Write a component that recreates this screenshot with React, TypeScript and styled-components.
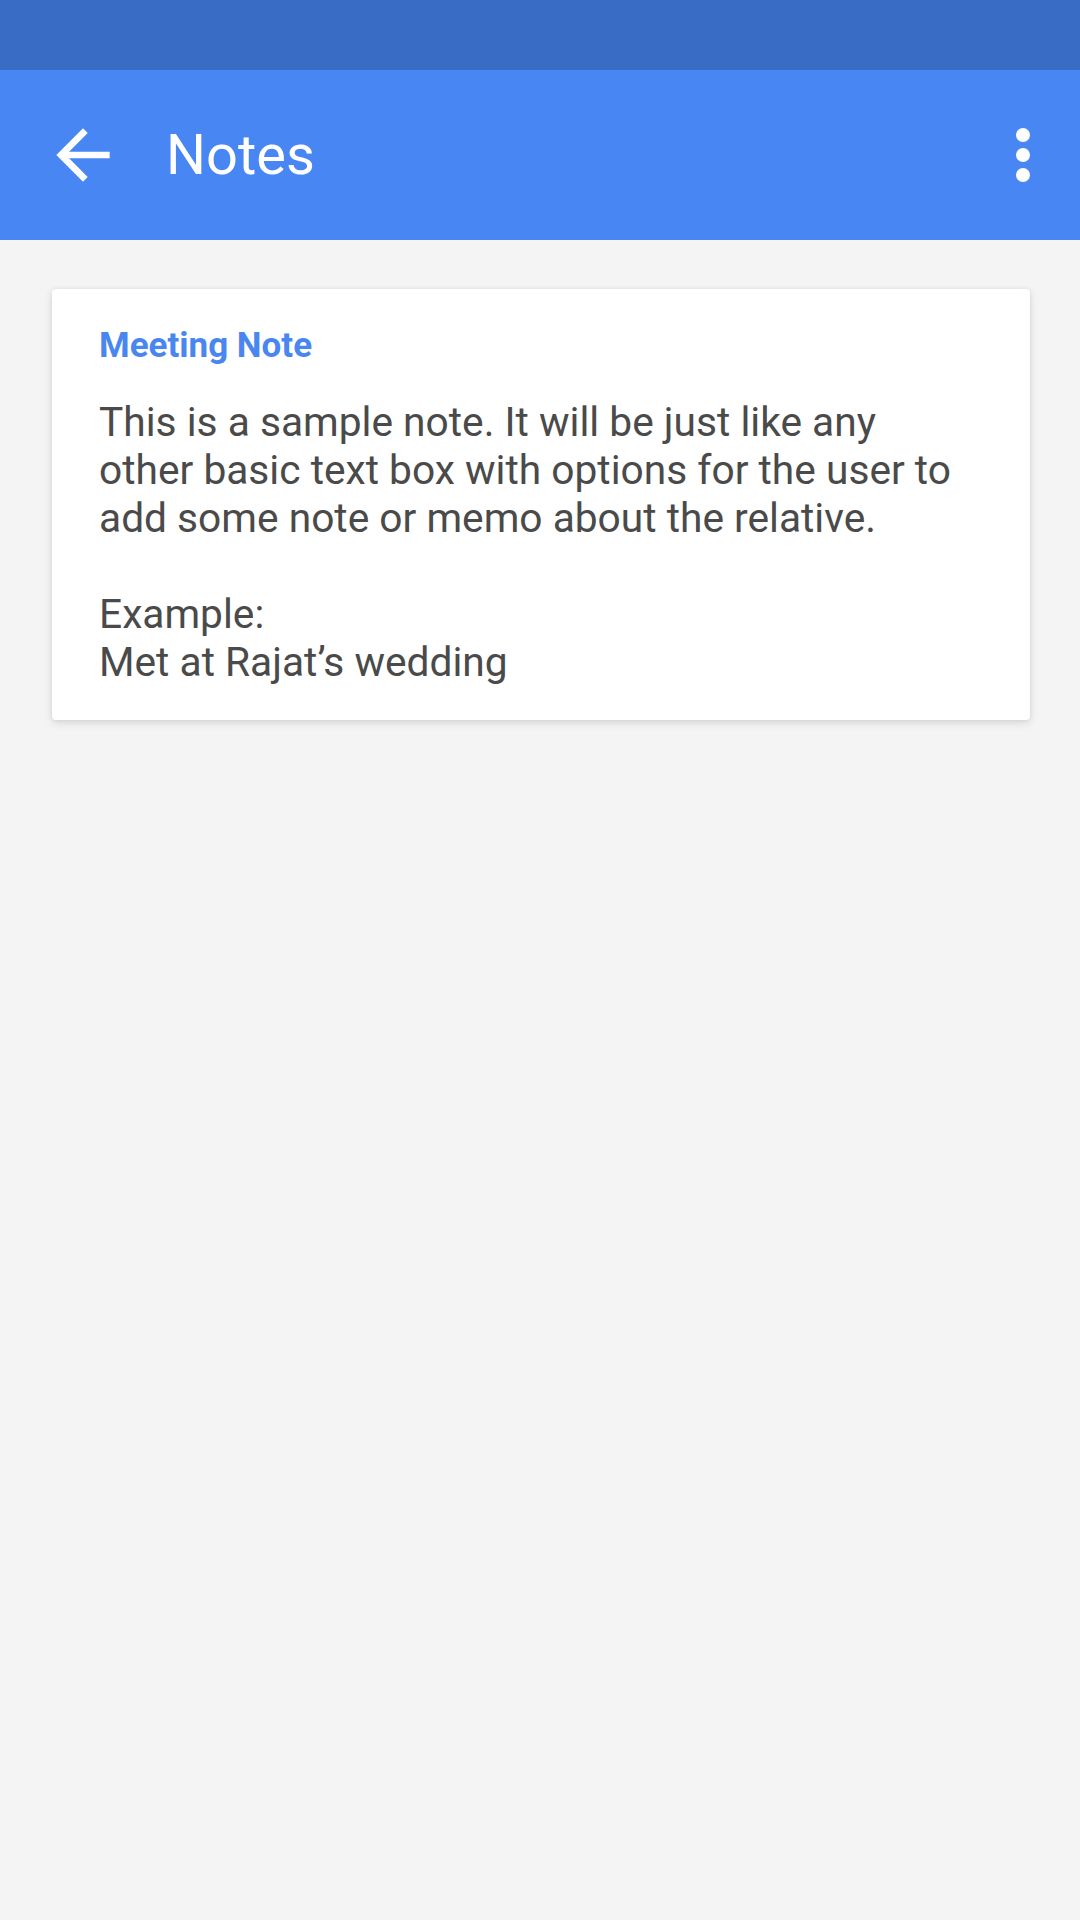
import React from "react";
import styled, { createGlobalStyle } from "styled-components";

const GlobalStyle = createGlobalStyle`
  html, body {
    margin: 0;
    padding: 0;
    background: #f4f4f4;
    font-family: Roboto, "Noto Sans", "Liberation Sans", sans-serif;
  }
  * { box-sizing: border-box; }
`;

const Screen = styled.div`
  width: 1080px;
  min-height: 1920px;
  background: #f4f4f4;
  display: flex;
  flex-direction: column;
`;

const StatusBar = styled.div`
  height: 70px;
  background: #386cc5;
`;

const AppBar = styled.header`
  height: 170px;
  background: #4786f3;
  display: flex;
  align-items: center;
  padding: 0 17px 0 43px;
`;

const IconButton = styled.button`
  width: 80px;
  height: 80px;
  padding: 0;
  border: none;
  background: transparent;
  display: flex;
  align-items: center;
  justify-content: center;
  color: #ffffff;
  svg {
    width: 80px;
    height: 80px;
    display: block;
  }
`;

const Title = styled.h1`
  flex: 1;
  margin: 0 0 0 43px;
  font-family: Roboto, "Noto Sans", sans-serif;
  font-weight: 400;
  font-size: 56px;
  line-height: 1;
  color: #ffffff;
`;

const Content = styled.main`
  padding: 49px 50px 0 52px;
`;

const Card = styled.section`
  background: #ffffff;
  border-radius: 4px;
  box-shadow: 0 3px 8px rgba(0, 0, 0, 0.12), 0 0 4px rgba(0, 0, 0, 0.06);
  padding: 35px 65px 34px 47px;
`;

const CardTitle = styled.h2`
  margin: 0 0 31px 0;
  font-family: Roboto, "Noto Sans", sans-serif;
  font-weight: 700;
  font-size: 35px;
  line-height: 43px;
  color: #4a86f0;
`;

const Body = styled.p`
  margin: 0;
  font-family: Roboto, "Noto Sans", sans-serif;
  font-weight: 400;
  font-size: 40.7px;
  line-height: 48px;
  color: #4a4a4a;
  white-space: pre-line;
`;

const BackIcon = () => (
  <svg viewBox="0 0 24 24" fill="currentColor" aria-hidden="true">
    <path d="M20 11H7.83l5.59-5.59L12 4l-8 8 8 8 1.41-1.41L7.83 13H20v-2z" />
  </svg>
);

const MoreIcon = () => (
  <svg viewBox="0 0 24 24" fill="currentColor" aria-hidden="true">
    <circle cx="12" cy="6" r="2.1" />
    <circle cx="12" cy="12" r="2.1" />
    <circle cx="12" cy="18" r="2.1" />
  </svg>
);

export default function App() {
  return (
    <>
      <GlobalStyle />
      <Screen>
        <StatusBar />
        <AppBar>
          <IconButton aria-label="Back">
            <BackIcon />
          </IconButton>
          <Title>Notes</Title>
          <IconButton aria-label="More options">
            <MoreIcon />
          </IconButton>
        </AppBar>
        <Content>
          <Card>
            <CardTitle>Meeting Note</CardTitle>
            <Body>
              {"This is a sample note. It will be just like any other basic text box with options for the user to add some note or memo about the relative.\n\nExample:\nMet at Rajat\u2019s wedding"}
            </Body>
          </Card>
        </Content>
      </Screen>
    </>
  );
}
